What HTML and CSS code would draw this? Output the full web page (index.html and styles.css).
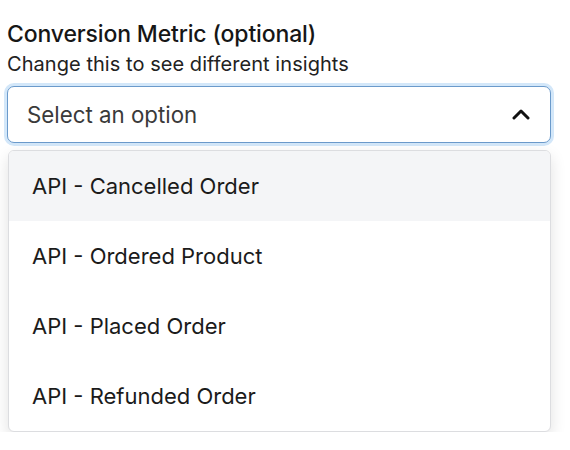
FILE: index.html
```html
<!DOCTYPE html>
<html>
<head>
<meta charset="utf-8">
<link rel="stylesheet" href="styles.css">
</head>
<body>
<div class="field">
  <div class="label">Conversion Metric (optional)</div>
  <div class="hint">Change this to see different insights</div>
  <div class="select">
    <span class="placeholder">Select an option</span>
    <svg class="chevron" width="18" height="12" viewBox="0 0 18 12"><path d="M2 10 L9 3 L16 10" fill="none" stroke="#111" stroke-width="3" stroke-linecap="round" stroke-linejoin="round"/></svg>
  </div>
  <ul class="menu">
    <li class="option active">API - Cancelled Order</li>
    <li class="option">API - Ordered Product</li>
    <li class="option">API - Placed Order</li>
    <li class="option">API - Refunded Order</li>
  </ul>
</div>
</body>
</html>
```
FILE: styles.css
```css
html, body {
  margin: 0;
  padding: 0;
  background: #fff;
}
body {
  font-family: Inter, "Open Sans", sans-serif;
  color: #1b1b1b;
}
.field {
  width: 544px;
  padding: 20px 0 0 7px;
}
.label {
  font-size: 23px;
  font-weight: 500;
  line-height: 28px;
  letter-spacing: -0.15px;
  color: #161616;
}
.hint {
  font-size: 20px;
  line-height: 24px;
  margin-top: 4px;
  letter-spacing: 0.05px;
  color: #222;
}
.select {
  margin-top: 10px;
  height: 57px;
  box-sizing: border-box;
  border: 1px solid #6b9acb;
  border-radius: 7px;
  box-shadow: 0 0 0 3px #d3e7f9;
  display: flex;
  align-items: center;
  justify-content: space-between;
  padding: 0 20px 0 19px;
  background: #fff;
}
.placeholder {
  font-size: 22.3px;
  color: #3a3a3a;
}
.chevron {
  display: block;
  margin-top: -2px;
}
.menu {
  list-style: none;
  margin: 7px 0 0 1px;
  padding: 0;
  border: 1px solid #dcdde0;
  border-radius: 6px;
  overflow: hidden;
  box-shadow: 0 6px 16px rgba(0,0,0,0.12);
  background: #fff;
}
.option {
  height: 70px;
  display: flex;
  align-items: center;
  padding-left: 23px;
  font-size: 22px;
  color: #1b1b1b;
}
.option.active {
  background: #f4f5f7;
}
```
